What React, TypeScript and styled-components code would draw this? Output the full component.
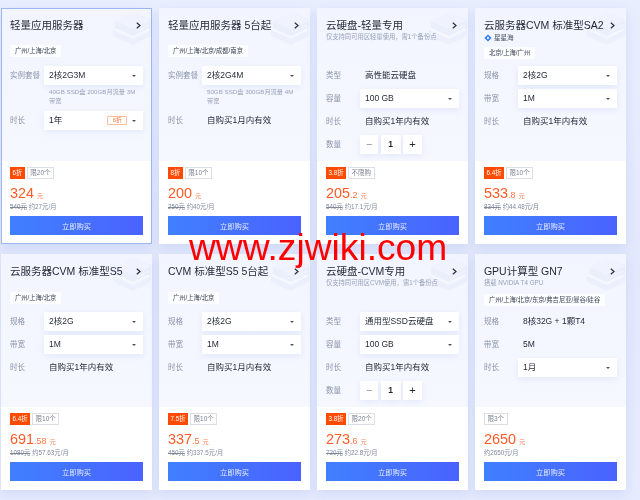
import { createGlobalStyle, styled } from "styled-components";

const GlobalStyle = createGlobalStyle`
  html, body {
    margin: 0;
    padding: 0;
    background: #e6ebfd;
  }
  * {
    box-sizing: border-box;
  }
`;

const Page = styled.div`
  position: relative;
  width: 640px;
  height: 500px;
  overflow: hidden;
  display: grid;
  grid-template-columns: repeat(4, 150.4px);
  grid-auto-rows: 236px;
  gap: 10px 7.6px;
  padding: 8px 0 0 1.2px;
  background: linear-gradient(180deg, #e9eefe 0%, #e3e9fb 50%, #e6ebfd 100%);
  font-family: "Liberation Sans", "Noto Sans CJK SC", sans-serif;
  filter: blur(0.3px);
`;

const Watermark = styled.div`
  position: absolute;
  left: 189px;
  top: 226px;
  font-size: 37.2px;
  line-height: 42px;
  color: #ff0000;
  white-space: nowrap;
  z-index: 5;
`;

const Card = styled.div<{ $active?: boolean }>`
  position: relative;
  display: flex;
  flex-direction: column;
  background: #fff;
  box-shadow: 0 4px 10px rgba(110, 140, 225, 0.18);
  outline: ${(p) => (p.$active ? "1px solid #9db8f0" : "none")};
  outline-offset: -1px;
`;

const Top = styled.div`
  height: 153px;
  padding: 0 8.4px 0 8.8px;
  background: linear-gradient(180deg, #f2f5ff 0%, #f6f8ff 100%);
`;

const Decor = styled.svg`
  position: absolute;
  top: 2px;
  right: 1px;
  width: 40px;
  height: 36px;
  opacity: 0.7;
`;

const Intro = styled.div`
  position: relative;
  height: 58px;
  padding-top: 10px;
`;

const TitleRow = styled.div`
  display: flex;
  align-items: center;
  justify-content: space-between;
  height: 14px;
  padding-right: 2.5px;
`;

const Title = styled.div`
  font-size: 10.5px;
  line-height: 14px;
  color: #1f2533;
  white-space: nowrap;
`;

const Sub = styled.div`
  margin-top: 1px;
  font-size: 6.3px;
  line-height: 8px;
  color: #98a2b8;
  white-space: nowrap;
`;

const Brand = styled.div`
  display: flex;
  align-items: center;
  gap: 2px;
  margin-top: 1px;
  height: 10px;
  font-size: 6.6px;
  line-height: 10px;
  color: #4b5568;
`;

const Region = styled.div<{ $top: number }>`
  position: absolute;
  top: ${(p) => p.$top}px;
  left: 0;
  height: 12px;
  padding: 0 5px;
  font-size: 6.3px;
  line-height: 12px;
  color: #3c4454;
  background: rgba(255, 255, 255, 0.75);
  white-space: nowrap;
`;

const Rows = styled.div`
  display: flex;
  flex-direction: column;
  gap: 4px;
`;

const Row = styled.div`
  display: grid;
  grid-template-columns: 34px 1fr;
  align-items: center;
  height: 19px;
`;

const Label = styled.div`
  font-size: 7.5px;
  line-height: 19px;
  color: #8a94a8;
  white-space: nowrap;
`;

const Select = styled.div`
  display: flex;
  align-items: center;
  justify-content: space-between;
  height: 19px;
  padding: 0 7px 0 5px;
  background: #fff;
  box-shadow: 0 2px 6px rgba(120, 145, 220, 0.14);
  font-size: 8.5px;
  line-height: 19px;
  color: #1f2533;
  white-space: nowrap;
`;

const SelectEnd = styled.div`
  display: flex;
  align-items: center;
  gap: 5px;
`;

const Caret = styled.span`
  width: 0;
  height: 0;
  border-left: 2.2px solid transparent;
  border-right: 2.2px solid transparent;
  border-top: 2.4px solid #4a5262;
`;

const DiscountMark = styled.span`
  width: 20px;
  height: 9px;
  border: 1px solid #ffbd9c;
  border-radius: 1px;
  font-size: 5.8px;
  line-height: 7px;
  text-align: center;
  color: #ff7a3c;
`;

const Value = styled.div`
  padding-left: 5px;
  font-size: 8.5px;
  line-height: 19px;
  color: #1f2533;
  white-space: nowrap;
`;

const Hint = styled.div`
  margin: -1px 0 0 39px;
  width: 92px;
  height: 19px;
  font-size: 6.2px;
  line-height: 8.7px;
  color: #98a2b8;
`;

const Stepper = styled.div`
  display: grid;
  grid-template-columns: 18.3px 20px 19px;
  gap: 2.3px;
  width: 62px;
`;

const StepCell = styled.div<{ $strong?: boolean; $muted?: boolean }>`
  height: 19px;
  background: #fff;
  box-shadow: 0 2px 6px rgba(120, 145, 220, 0.14);
  text-align: center;
  line-height: 19px;
  font-size: ${(p) => (p.$strong ? "8.5px" : "11px")};
  font-weight: ${(p) => (p.$strong ? 700 : 400)};
  color: ${(p) => (p.$muted ? "#8d96a6" : "#1f2533")};
`;

const Bottom = styled.div`
  display: flex;
  flex-direction: column;
  height: 83px;
  padding: 6px 8.4px 0 8.8px;
`;

const Tags = styled.div`
  display: flex;
  gap: 2px;
  height: 12px;
`;

const Off = styled.span`
  padding: 0 2.5px;
  background: #ff4a00;
  color: #fff;
  font-size: 6.3px;
  line-height: 12px;
  white-space: nowrap;
`;

const Limit = styled.span`
  padding: 0 2.5px;
  border: 1px solid #dcdfe6;
  color: #7d8594;
  font-size: 6.5px;
  line-height: 10px;
  white-space: nowrap;
`;

const Price = styled.div`
  display: flex;
  align-items: baseline;
  height: 16px;
  margin-top: 6px;
  line-height: 16px;
  color: #ff5a26;
  font-size: 14.4px;
  white-space: nowrap;
`;

const Fraction = styled.span`
  font-size: 9px;
  color: #ff7444;
`;

const Unit = styled.span`
  margin-left: 3px;
  font-size: 6.2px;
  color: #ff7f52;
`;

const Old = styled.div`
  margin-top: 1px;
  height: 10px;
  font-size: 6.3px;
  line-height: 10px;
  color: #7f899c;
  white-space: nowrap;
  s {
    margin-right: 2px;
  }
`;

const Buy = styled.button`
  height: 19px;
  margin-top: 4px;
  padding: 0;
  border: 0;
  background: linear-gradient(90deg, #4080ff 0%, #4a62ff 100%);
  color: rgba(255, 255, 255, 0.85);
  font-family: inherit;
  font-size: 7.3px;
`;

function Chevron() {
  return (
    <svg width="5" height="7" viewBox="0 0 5 7">
      <path d="M0.8 0.8 L4 3.5 L0.8 6.2" fill="none" stroke="#2a3040" strokeWidth="1.2" />
    </svg>
  );
}

function ServerArt() {
  return (
    <Decor viewBox="0 0 40 36">
      <path d="M2 20 L22 10 L40 18 L40 26 L22 35 L2 26 Z" fill="#eaeefc" />
      <path d="M2 20 L22 29 L40 20 L22 11 Z" fill="#f6f8ff" />
      <path d="M4 11 L22 2 L40 9 L40 17 L22 26 L4 18 Z" fill="#e8edfc" />
      <path d="M4 11 L22 19 L40 10 L22 2 Z" fill="#f0f3fe" />
      <path d="M26 21 L38 15" stroke="#f8f9ff" strokeWidth="1" />
    </Decor>
  );
}

function BrandMark() {
  return (
    <svg width="8" height="8" viewBox="0 0 8 8">
      <path d="M4 0.4 L7.6 4 L4 7.6 L0.4 4 Z M4 2.6 L2.6 4 L4 5.4 L5.4 4 Z" fill="#2f7df0" fillRule="evenodd" />
    </svg>
  );
}

type RowData =
  | { kind: "select"; label: string; value: string; mark?: string }
  | { kind: "text"; label: string; value: string }
  | { kind: "stepper"; label: string }
  | { kind: "hint"; text: string };

type Product = {
  title: string;
  sub?: string;
  brand?: string;
  region: string;
  regionTop: number;
  rows: RowData[];
  off?: string;
  limit: string;
  price: string;
  fraction?: string;
  old?: string;
  monthly: string;
  active?: boolean;
};

const products: Product[] = [
  {
    title: "轻量应用服务器",
    region: "广州/上海/北京",
    regionTop: 37,
    active: true,
    rows: [
      { kind: "select", label: "实例套餐", value: "2核2G3M" },
      { kind: "hint", text: "40GB SSD盘 200GB月流量 3M带宽" },
      { kind: "select", label: "时长", value: "1年", mark: "6折" },
    ],
    off: "6折",
    limit: "限20个",
    price: "324",
    old: "540元",
    monthly: "约27元/月",
  },
  {
    title: "轻量应用服务器 5台起",
    region: "广州/上海/北京/成都/南京",
    regionTop: 37,
    rows: [
      { kind: "select", label: "实例套餐", value: "2核2G4M" },
      { kind: "hint", text: "50GB SSD盘 300GB月流量 4M带宽" },
      { kind: "text", label: "时长", value: "自购买1月内有效" },
    ],
    off: "8折",
    limit: "限10个",
    price: "200",
    old: "250元",
    monthly: "约40元/月",
  },
  {
    title: "云硬盘-轻量专用",
    sub: "仅支持同可用区轻量使用，需1个备份点",
    region: "",
    regionTop: 0,
    rows: [
      { kind: "text", label: "类型", value: "高性能云硬盘" },
      { kind: "select", label: "容量", value: "100 GB" },
      { kind: "text", label: "时长", value: "自购买1年内有效" },
      { kind: "stepper", label: "数量" },
    ],
    off: "3.8折",
    limit: "不限购",
    price: "205",
    fraction: ".2",
    old: "540元",
    monthly: "约17.1元/月",
  },
  {
    title: "云服务器CVM 标准型SA2",
    brand: "星星海",
    region: "北京/上海/广州",
    regionTop: 39,
    rows: [
      { kind: "select", label: "规格", value: "2核2G" },
      { kind: "select", label: "带宽", value: "1M" },
      { kind: "text", label: "时长", value: "自购买1年内有效" },
    ],
    off: "6.4折",
    limit: "限10个",
    price: "533",
    fraction: ".8",
    old: "834元",
    monthly: "约44.48元/月",
  },
  {
    title: "云服务器CVM 标准型S5",
    region: "广州/上海/北京",
    regionTop: 38,
    rows: [
      { kind: "select", label: "规格", value: "2核2G" },
      { kind: "select", label: "带宽", value: "1M" },
      { kind: "text", label: "时长", value: "自购买1年内有效" },
    ],
    off: "6.4折",
    limit: "限10个",
    price: "691",
    fraction: ".58",
    old: "1080元",
    monthly: "约57.63元/月",
  },
  {
    title: "CVM 标准型S5 5台起",
    region: "广州/上海/北京",
    regionTop: 38,
    rows: [
      { kind: "select", label: "规格", value: "2核2G" },
      { kind: "select", label: "带宽", value: "1M" },
      { kind: "text", label: "时长", value: "自购买1月内有效" },
    ],
    off: "7.5折",
    limit: "限10个",
    price: "337",
    fraction: ".5",
    old: "450元",
    monthly: "约337.5元/月",
  },
  {
    title: "云硬盘-CVM专用",
    sub: "仅支持同可用区CVM使用，需1个备份点",
    region: "",
    regionTop: 0,
    rows: [
      { kind: "select", label: "类型", value: "通用型SSD云硬盘" },
      { kind: "select", label: "容量", value: "100 GB" },
      { kind: "text", label: "时长", value: "自购买1年内有效" },
      { kind: "stepper", label: "数量" },
    ],
    off: "3.8折",
    limit: "限20个",
    price: "273",
    fraction: ".6",
    old: "720元",
    monthly: "约22.8元/月",
  },
  {
    title: "GPU计算型 GN7",
    sub: "搭载 NVIDIA T4 GPU",
    region: "广州/上海/北京/东京/弗吉尼亚/曼谷/硅谷",
    regionTop: 40,
    rows: [
      { kind: "text", label: "规格", value: "8核32G + 1颗T4" },
      { kind: "text", label: "带宽", value: "5M" },
      { kind: "select", label: "时长", value: "1月" },
    ],
    limit: "限3个",
    price: "2650",
    monthly: "约2650元/月",
  },
];

function OptionRow({ row }: { row: RowData }) {
  if (row.kind === "hint") return <Hint>{row.text}</Hint>;
  return (
    <Row>
      <Label>{row.label}</Label>
      {row.kind === "select" && (
        <Select>
          {row.value}
          <SelectEnd>
            {row.mark && <DiscountMark>{row.mark}</DiscountMark>}
            <Caret />
          </SelectEnd>
        </Select>
      )}
      {row.kind === "text" && <Value>{row.value}</Value>}
      {row.kind === "stepper" && (
        <Stepper>
          <StepCell $muted>−</StepCell>
          <StepCell $strong>1</StepCell>
          <StepCell>+</StepCell>
        </Stepper>
      )}
    </Row>
  );
}

function ProductCard({ product }: { product: Product }) {
  return (
    <Card $active={product.active}>
      <Top>
        <ServerArt />
        <Intro>
          <TitleRow>
            <Title>{product.title}</Title>
            <Chevron />
          </TitleRow>
          {product.sub && <Sub>{product.sub}</Sub>}
          {product.brand && (
            <Brand>
              <BrandMark />
              {product.brand}
            </Brand>
          )}
          {product.region && <Region $top={product.regionTop}>{product.region}</Region>}
        </Intro>
        <Rows>
          {product.rows.map((row, i) => (
            <OptionRow key={i} row={row} />
          ))}
        </Rows>
      </Top>
      <Bottom>
        <Tags>
          {product.off && <Off>{product.off}</Off>}
          <Limit>{product.limit}</Limit>
        </Tags>
        <Price>
          {product.price}
          {product.fraction && <Fraction>{product.fraction}</Fraction>}
          <Unit>元</Unit>
        </Price>
        <Old>
          {product.old && <s>{product.old}</s>}
          {product.monthly}
        </Old>
        <Buy>立即购买</Buy>
      </Bottom>
    </Card>
  );
}

export default function App() {
  return (
    <>
      <GlobalStyle />
      <Page>
        {products.map((product) => (
          <ProductCard key={product.title} product={product} />
        ))}
        <Watermark>www.zjwiki.com</Watermark>
      </Page>
    </>
  );
}
